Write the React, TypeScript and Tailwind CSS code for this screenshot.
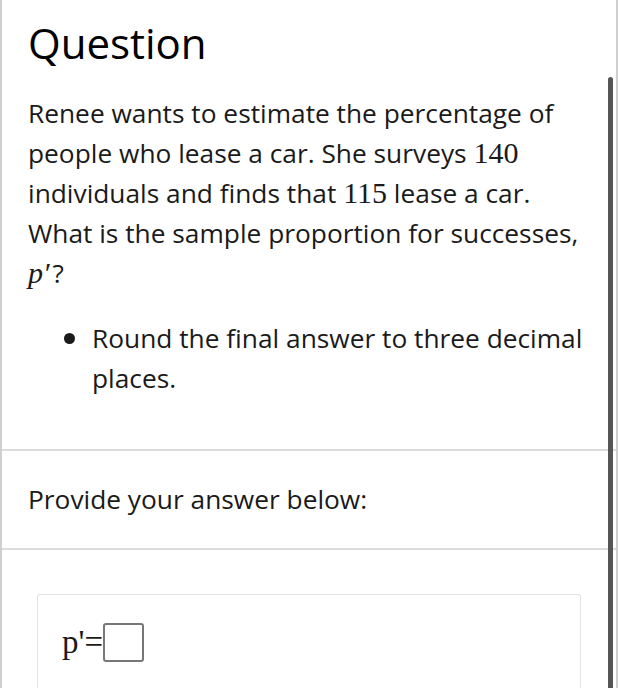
import React from "react";

const SANS = "font-['Open_Sans',_'Liberation_Sans',_sans-serif]";
const SERIF = "font-['Liberation_Serif',_'DejaVu_Serif',_serif]";

function MathNum({ children }: { children: React.ReactNode }) {
  return <span className={`${SERIF} text-[30px]`}>{children}</span>;
}

export default function App() {
  return (
    <div className={`relative h-[688px] w-[618px] overflow-hidden bg-white text-[#1a1a1a] ${SANS}`}>
      <div className="flex h-full flex-col border-l-2 border-r-2 border-[#cfcfcf]">
        <div className="px-[26px] pt-[16px]">
          <h1 className="text-[42px] leading-[54px] font-normal text-black">Question</h1>
          <p className="mt-[23px] text-[26.3px] leading-[40px]">
            Renee wants to estimate the percentage of people who lease a car. She surveys <MathNum>140</MathNum>{" "}
            individuals and finds that <MathNum>115</MathNum> lease a car. What is the sample proportion for
            successes, <span className={`${SERIF} text-[30px] italic`}>p′</span>
            <span className="ml-[3px]">?</span>
          </p>
          <ul className="mt-[25px] pl-[36px]">
            <li className="flex gap-[17px] text-[26.3px] leading-[40px]">
              <span className="mt-[15px] h-[11px] w-[11px] shrink-0 rounded-full bg-[#1a1a1a]" />
              <span>Round the final answer to three decimal places.</span>
            </li>
          </ul>
        </div>

        <div className="mt-[51px] border-t-2 border-[#dcdcdc]" />
        <div className="flex h-[97px] items-center px-[26px] text-[26.3px]">Provide your answer below:</div>
        <div className="border-t-2 border-[#dcdcdc]" />

        <div className="mx-[35px] mt-[44px] flex-1 rounded-t-[3px] border border-b-0 border-[#e3e3e3] px-[24px] pt-[28px]">
          <div className="flex items-center">
            <span className={`${SERIF} text-[33px] leading-none`}>p'=</span>
            <div className="h-[39px] w-[41px] rounded-[3px] border-2 border-[#777]" />
          </div>
        </div>
      </div>

      {/* scrollbar thumb */}
      <div className="absolute right-[5px] top-[77px] h-[640px] w-[5px] rounded-t-sm bg-[#555]" />
    </div>
  );
}
